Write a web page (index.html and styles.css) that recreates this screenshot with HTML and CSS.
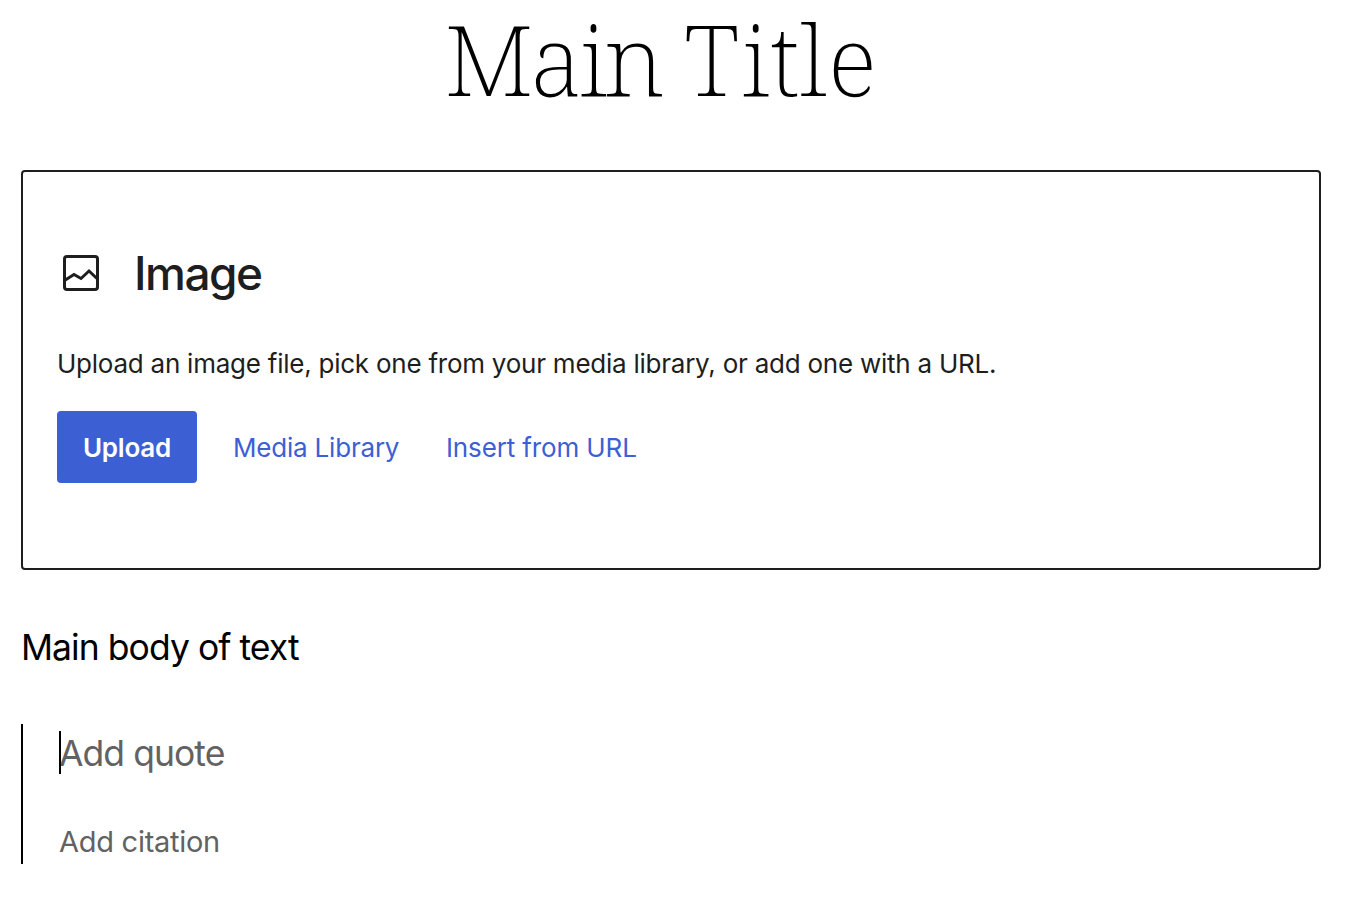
FILE: index.html
```html
<!DOCTYPE html>
<html lang="en">
<head>
<meta charset="utf-8">
<title>Main Title</title>
<link rel="stylesheet" href="styles.css">
</head>
<body>
<main class="editor">
  <h1 class="title"><span class="title-lead">Main</span> <span class="title-end">Title</span></h1>
  <section class="placeholder">
    <h2 class="label">
      <svg class="icon" viewBox="0 0 36 36" fill="none" stroke="#1e1e1e" stroke-width="3">
        <rect x="1.5" y="1.5" width="33" height="33" rx="2.5"/>
        <path d="M1.5 25.5 L11 19.5 L18 23.5 L26 16 L34.5 24"/>
      </svg>
      <span class="label-text">Image</span>
    </h2>
    <p class="instructions">Upload an image file, pick one from your media library, or add one with a URL.</p>
    <div class="actions">
      <button class="button primary">Upload</button>
      <button class="button media">Media Library</button>
      <button class="button url">Insert from URL</button>
    </div>
  </section>
  <p class="body-text">Main body of text</p>
  <blockquote class="quote">
    <p class="quote-text"><span class="caret"></span>Add quote</p>
    <cite class="citation">Add citation</cite>
  </blockquote>
</main>
</body>
</html>
```
FILE: styles.css
```css
* { box-sizing: border-box; }
body { margin: 0; background: #fff; color: #000; font-family: Inter, "Liberation Sans", sans-serif; }
.editor { width: 1300px; margin-left: 21px; }
.title { margin: 0; height: 170px; padding-right: 20px; text-align: center; font: 200 98px/116px "Noto Serif", "Liberation Serif", serif; word-spacing: -3px; }
.title-lead { letter-spacing: -3.4px; }
.title-end { letter-spacing: 1px; }
.placeholder { height: 400px; padding: 70px 34px; border: 2px solid #1e1e1e; border-radius: 4px; color: #1e1e1e; }
.label { display: flex; align-items: center; gap: 35px; height: 62px; margin: 0; padding-left: 6px; font-size: 46px; font-weight: 450; letter-spacing: -1.5px; }
.icon { width: 36px; height: 36px; }
.instructions { margin: 42px 0 29px; font-size: 26px; line-height: 36px; letter-spacing: -0.24px; white-space: nowrap; }
.actions { display: flex; }
.button { height: 72px; padding: 0; border: 0; border-radius: 4px; background: none; color: #3c60d3; font: 400 26px Inter, sans-serif; letter-spacing: -0.2px; white-space: nowrap; text-align: left; }
.primary { width: 140px; margin-right: 36px; background: #3c60d3; color: #fff; font-weight: 600; text-align: center; }
.media { width: 213px; }
.url { letter-spacing: -0.13px; }
.body-text { margin: 50px 0 0; font-size: 35.5px; line-height: 56px; letter-spacing: -0.95px; }
.quote { margin: 48px 0 0; height: 140px; padding-left: 36px; border-left: 2px solid #000; color: #626262; }
.quote-text { position: relative; margin: 0; font-size: 35.5px; line-height: 60px; letter-spacing: -0.95px; }
.caret { position: absolute; left: 0; top: 7px; width: 2px; height: 43px; background: #000; }
.citation { display: block; margin-top: 38px; font-size: 29px; font-style: normal; line-height: 40px; letter-spacing: -0.27px; }
```
